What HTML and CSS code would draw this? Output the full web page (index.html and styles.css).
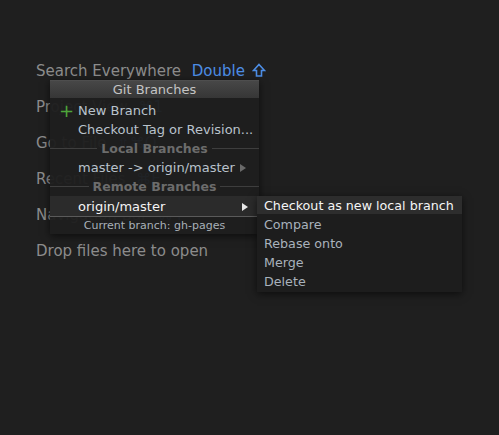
FILE: index.html
```html
<!DOCTYPE html>
<html>
<head>
<meta charset="utf-8">
<link rel="stylesheet" href="styles.css">
</head>
<body>
<div class="editor">
  <div class="hints">
    <div class="hint">Search Everywhere <span class="key">Double <svg class="shift" width="14" height="15" viewBox="0 0 14 15"><path d="M7 1.5 L12.5 7.5 H9.5 V13 H4.5 V7.5 H1.5 Z" fill="none" stroke="#4d8ee6" stroke-width="1.6" stroke-linejoin="miter"/></svg></span></div>
    <div class="hint">Project View <span class="key">⌘1</span></div>
    <div class="hint">Go to File <span class="key">⇧⌘O</span></div>
    <div class="hint">Recent Files <span class="key">⌘E</span></div>
    <div class="hint">Navigation Bar <span class="key">⌘↑</span></div>
    <div class="hint">Drop files here to open</div>
  </div>

  <div class="popup">
    <div class="popup-title">Git Branches</div>
    <div class="item"><span class="plus">+</span>New Branch</div>
    <div class="item">Checkout Tag or Revision...</div>
    <div class="sep"><span>Local Branches</span></div>
    <div class="item sub">master -&gt; origin/master<span class="arrow dim"></span></div>
    <div class="sep"><span>Remote Branches</span></div>
    <div class="item sub active">origin/master<span class="arrow"></span></div>
    <div class="footer">Current branch: gh-pages</div>
  </div>

  <div class="submenu">
    <div class="sitem active">Checkout as new local branch</div>
    <div class="sitem">Compare</div>
    <div class="sitem">Rebase onto</div>
    <div class="sitem">Merge</div>
    <div class="sitem">Delete</div>
  </div>
</div>
</body>
</html>
```

FILE: styles.css
```css
html, body {
  margin: 0;
  padding: 0;
  background: #1f1f1f;
  width: 499px;
  height: 435px;
  overflow: hidden;
}
.editor {
  position: relative;
  width: 499px;
  height: 435px;
  font-family: "DejaVu Sans", sans-serif;
}
.hints {
  display: flex;
  flex-direction: column;
  gap: 17px;
  padding: 62px 0 0 36px;
}
.hint {
  font-size: 15px;
  line-height: 19px;
  color: #8c8c8c;
  white-space: nowrap;
}
.key {
  color: #4d8ee6;
  margin-left: 6px;
}
.shift {
  vertical-align: -2px;
  margin-left: 2px;
}
.popup {
  position: absolute;
  left: 50px;
  top: 80px;
  width: 209px;
  background: rgba(30, 30, 30, 0.96);
  box-shadow: 0 2px 8px rgba(0,0,0,0.6);
  font-size: 13px;
  color: #b9c2cc;
}
.popup-title {
  height: 18px;
  line-height: 19px;
  text-align: center;
  color: #c4c4c4;
  background: linear-gradient(#555555 0, #474747 1px, #363636 100%);
  margin-bottom: 3px;
}
.item {
  position: relative;
  height: 19px;
  line-height: 19px;
  padding-left: 28px;
  white-space: nowrap;
}
.plus {
  position: absolute;
  left: 9px;
  top: 0;
  color: #4ea53a;
  font-size: 18px;
}
.item.active {
  height: 20px;
  line-height: 21px;
  background: #2b2b2b;
  color: #f4f4f4;
  border-bottom: 1px solid #5a5a5a;
  margin-right: 2px;
}
.arrow {
  position: absolute;
  right: 11px;
  top: 6px;
  width: 0;
  height: 0;
  border-left: 6px solid #e8e8e8;
  border-top: 4px solid transparent;
  border-bottom: 4px solid transparent;
}
.arrow.dim { border-left-color: #6a6a6a; right: 13px; }
.item.active .arrow { right: 9px; top: 7px; }
.sep {
  display: flex;
  align-items: center;
  height: 19px;
  gap: 4px;
  font-size: 12.5px;
  color: #6c6c6c;
  font-weight: bold;
}
.sep::before, .sep::after {
  content: "";
  flex: 1;
  height: 1px;
  background: #3e3e3e;
}
.footer {
  height: 17px;
  line-height: 18px;
  text-align: center;
  font-size: 11px;
  color: #a8b0b8;
}
.submenu {
  position: absolute;
  left: 257px;
  top: 196px;
  width: 205px;
  padding-bottom: 2px;
  background: #1d1d1d;
  box-shadow: 0 2px 8px rgba(0,0,0,0.6);
  font-size: 12.7px;
  color: #a9b2bc;
}
.sitem {
  height: 19px;
  line-height: 21px;
  padding-left: 7px;
  white-space: nowrap;
}
.sitem.active {
  background: #2d2d2d;
  color: #f5f5f5;
  height: 18px;
  line-height: 19px;
}
```
